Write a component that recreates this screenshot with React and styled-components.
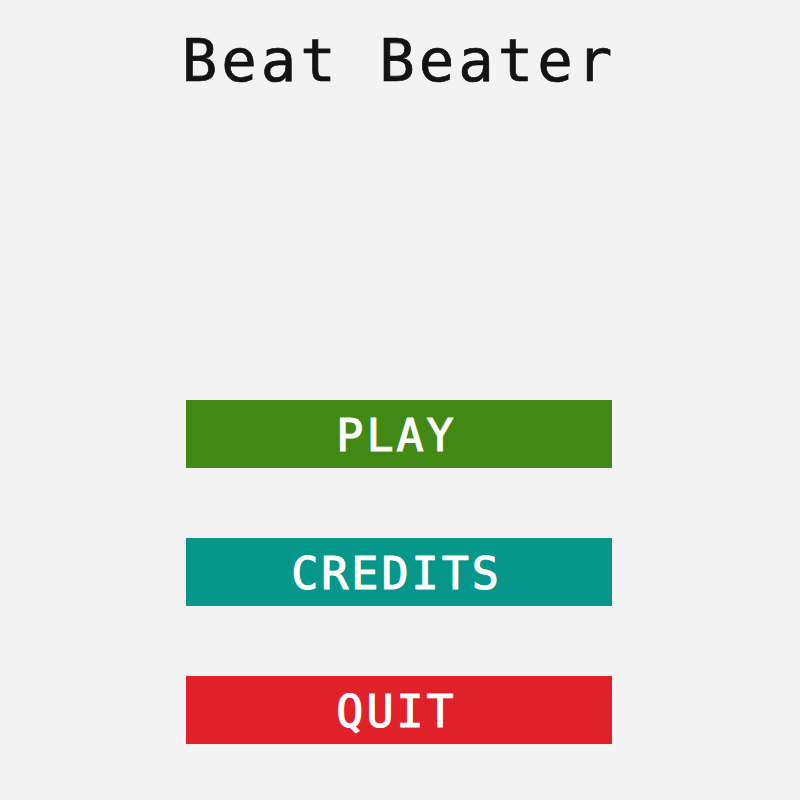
import React from "react";
import styled, { createGlobalStyle } from "styled-components";

const GlobalStyle = createGlobalStyle`
  html, body {
    margin: 0;
    padding: 0;
    background: #f2f3f2;
  }
  body {
    font-family: "DejaVu Sans Mono", "Liberation Mono", monospace;
  }
`;

// menu entries, top to bottom
const menuItems = [
  { label: "PLAY", color: "#418914" },
  { label: "CREDITS", color: "#06968a" },
  { label: "QUIT", color: "#e0212a" },
];

function App() {
  return (
    <>
      <GlobalStyle />
      <Page>
        <Title>Beat Beater</Title>
        <Menu>
          {menuItems.map((item) => (
            <MenuButton key={item.label} $bg={item.color}>
              {item.label}
            </MenuButton>
          ))}
        </Menu>
      </Page>
    </>
  );
}

export default App;

const Page = styled.div`
  min-height: 100vh;
  display: flex;
  flex-direction: column;
  align-items: center;
  box-sizing: border-box;
  padding-top: 31px;
`;

const Title = styled.h1`
  margin: 0 0 0 -2px;
  font-size: 59px;
  line-height: 59px;
  letter-spacing: 4px;
  font-weight: normal;
  color: #141213;
  -webkit-text-stroke: 0.7px #141213;
`;

const Menu = styled.div`
  margin-top: 310px;
  display: flex;
  flex-direction: column;
  gap: 70px;
  margin-left: -2px;
`;

const MenuButton = styled.button`
  width: 426px;
  height: 68px;
  border: none;
  padding: 2px 5px 0 0;
  margin: 0;
  background: ${(p) => p.$bg};
  color: #ffffff;
  font-family: inherit;
  font-size: 45px;
  line-height: 1;
  letter-spacing: 3px;
  font-weight: normal;
  -webkit-text-stroke: 1.1px #ffffff;
  cursor: pointer;
  display: flex;
  align-items: center;
  justify-content: center;
`;
